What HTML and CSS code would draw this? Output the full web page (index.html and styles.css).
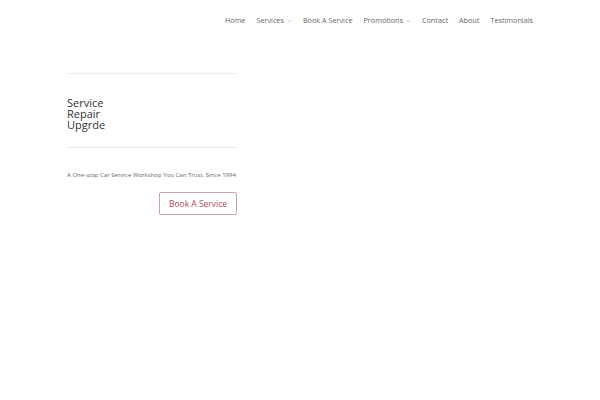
FILE: index.html
```html
<!DOCTYPE html>
<html lang="en">
<head>
<meta charset="utf-8">
<title>Car Service</title>
<link rel="stylesheet" href="styles.css">
</head>
<body>
<header class="header">
  <nav class="nav">
    <a class="nav-item" href="#">Home</a>
    <a class="nav-item has-sub" href="#">Services<span class="caret"><svg width="5" height="4" viewBox="0 0 5 4"><path d="M0.7 1 L2.5 2.8 L4.3 1" fill="none" stroke="#aaa" stroke-width="0.7"/></svg></span></a>
    <a class="nav-item" href="#">Book A Service</a>
    <a class="nav-item has-sub" href="#">Promotions<span class="caret"><svg width="5" height="4" viewBox="0 0 5 4"><path d="M0.7 1 L2.5 2.8 L4.3 1" fill="none" stroke="#aaa" stroke-width="0.7"/></svg></span></a>
    <a class="nav-item" href="#">Contact</a>
    <a class="nav-item" href="#">About</a>
    <a class="nav-item" href="#">Testimonials</a>
  </nav>
</header>
<main class="content">
  <section class="hero">
    <hr class="divider">
    <h1 class="title"><span class="title-line">Service</span><span class="title-line">Repair</span><span class="title-line">Upgrde</span></h1>
    <hr class="divider divider-bottom">
    <p class="tagline">A One-stop Car Service Workshop You Can Trust. Since 1994</p>
    <div class="actions">
      <a class="btn" href="#">Book A Service</a>
    </div>
  </section>
</main>
</body>
</html>
```
FILE: styles.css
```css
* { box-sizing: border-box; }
html, body { margin: 0; padding: 0; background: #fff; }
body {
  font-family: "Open Sans", "Liberation Sans", sans-serif;
  color: #666;
  width: 600px;
  height: 400px;
  overflow: hidden;
}
a { text-decoration: none; }

.header {
  display: flex;
  justify-content: flex-end;
  padding: 10px 67px 0 0;
  height: 30px;
}
.nav {
  display: flex;
  gap: 11px;
  align-items: center;
}
.nav-item {
  font-size: 7.25px;
  font-weight: 500;
  color: #666;
  display: flex;
  align-items: center;
  line-height: 10px;
}
.caret {
  display: inline-flex;
  margin-left: 3px;
  margin-top: 1px;
}

.content {
  padding: 43px 0 0 67px;
}
.hero {
  width: 170px;
}
.divider {
  border: 0;
  border-top: 1px solid #eaeaea;
  margin: 0;
  height: 0;
}
.title {
  margin: 23px 0 0 0;
  font-size: 11px;
  font-weight: 400;
  line-height: 11px;
  color: #333;
  display: flex;
  flex-direction: column;
}
.title-line {
  display: block;
  height: 11px;
}
.divider-bottom {
  margin-top: 17px;
}
.tagline {
  margin: 23px 0 0 0;
  font-size: 6.05px;
  line-height: 8px;
  color: #666;
  white-space: nowrap;
}
.actions {
  display: flex;
  justify-content: flex-end;
  margin-top: 13px;
}
.btn {
  display: inline-block;
  border: 1.5px solid #c9a3a7;
  border-radius: 2px;
  color: #b34a55;
  font-size: 8.5px;
  line-height: 12px;
  padding: 4.5px 8px;
  width: 78px;
  text-align: center;
}
```
